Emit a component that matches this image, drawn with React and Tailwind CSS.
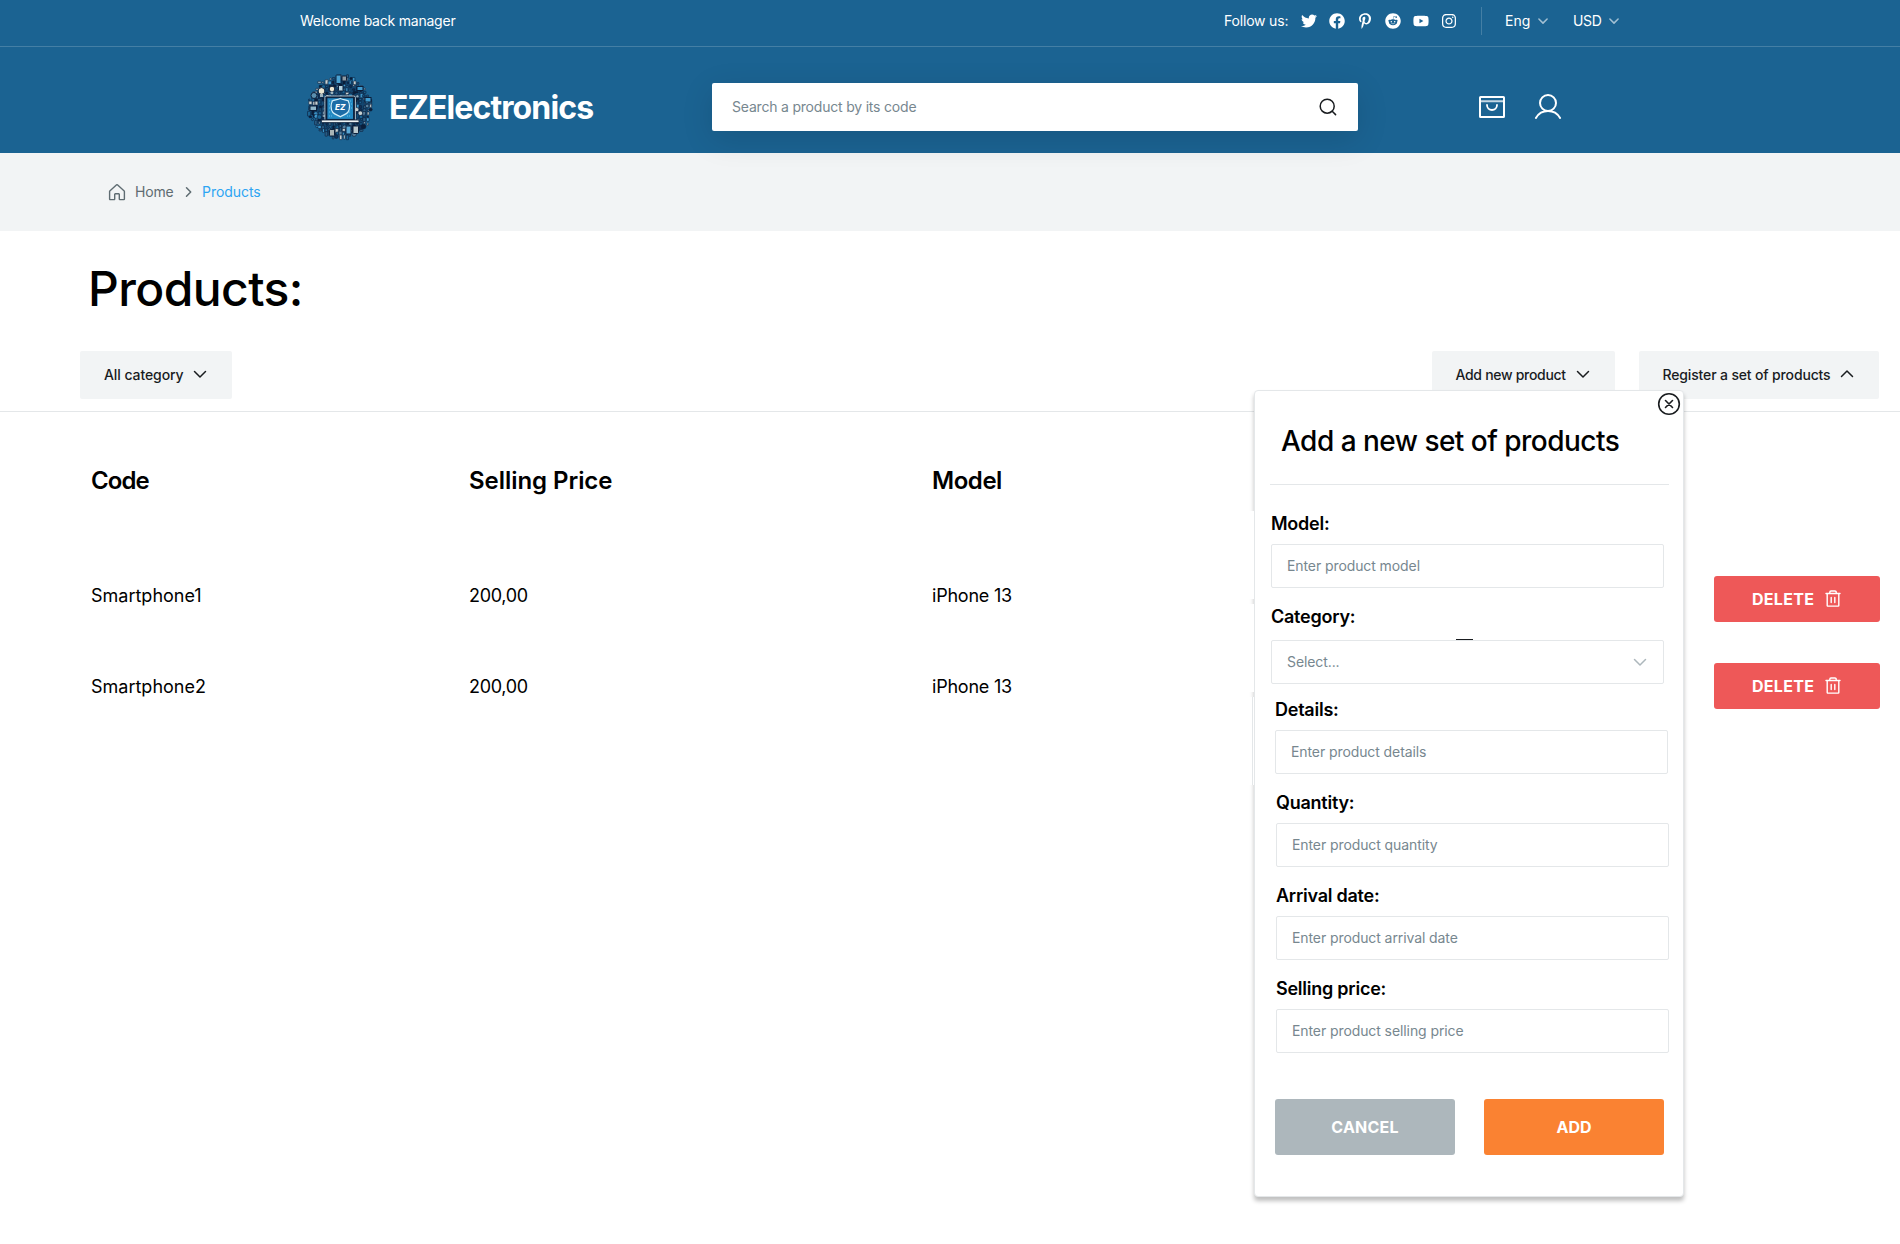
import React from "react";
import { FaFacebook, FaInstagram, FaPinterestP, FaTwitter, FaYoutube, FaReddit } from "react-icons/fa";

function Chevron({ up, className }) {
  return (
    <svg viewBox="0 0 16 16" className={className} fill="none" stroke="currentColor" strokeWidth="1.5" strokeLinecap="round" strokeLinejoin="round">
      <path d={up ? "M2.5 10.5 8 5l5.5 5.5" : "M2.5 5.5 8 11l5.5-5.5"} />
    </svg>
  );
}

function SmallChevron() {
  return (
    <svg viewBox="0 0 12 12" className="size-3 text-white/60" fill="none" stroke="currentColor" strokeWidth="1.5" strokeLinecap="round" strokeLinejoin="round">
      <path d="M1.9 4 6 8.1 10.1 4" />
    </svg>
  );
}

function seeded(seed) {
  let s = seed;
  return () => {
    s = (s * 16807) % 2147483647;
    return s / 2147483647;
  };
}

const PALETTE = ["#0b1f3a", "#123258", "#2b5f86", "#8fb0c2", "#3f9bd0", "#c9d2d2", "#56809e", "#1B6392", "#1B6392"];

const GADGETS = (() => {
  const rand = seeded(4127);
  const items = [];
  for (let y = 9; y <= 74; y += 3.4) {
    for (let x = 8; x <= 72; x += 3.4) {
      const cx = x + rand() * 1.6;
      const cy = y + rand() * 1.6;
      const d = Math.hypot(cx - 39.5, cy - 41);
      const edge = 30 + rand() * 2.5;
      const kind = rand();
      const w = 1.2 + rand() * 2.2;
      const h = 1.4 + rand() * 3.4;
      const fill = PALETTE[Math.floor(rand() * PALETTE.length)];
      if (d < edge) items.push({ cx, cy, kind, w, h, fill });
    }
  }
  return items;
})();

function Logo() {
  return (
    <svg viewBox="0 0 80 80" className="mb-[2px] size-20 shrink-0">
      <circle cx="39.5" cy="41" r="28" fill="#0c2344" opacity=".45" />
      {GADGETS.map((g, i) =>
        g.kind < 0.2 ? (
          <circle key={i} cx={g.cx} cy={g.cy} r={g.w * 0.7} fill={g.fill} stroke="#0b1f3a" strokeWidth=".6" />
        ) : (
          <rect key={i} x={g.cx - g.w / 2} y={g.cy - g.h / 2} width={g.w} height={g.h} rx=".4" fill={g.fill} stroke="#0b1f3a" strokeWidth=".6" />
        )
      )}
      {/* light bulbs */}
      <circle cx="20.5" cy="25" r="3.4" fill="#e9e6d2" stroke="#0b1f3a" />
      <rect x="19" y="28" width="3" height="3" fill="#9fb4bd" />
      <circle cx="31" cy="23" r="2.8" fill="#e9e6d2" stroke="#0b1f3a" />
      <rect x="30" y="25.5" width="2.2" height="2.6" fill="#9fb4bd" />
      {/* phones and panels */}
      <rect x="35" y="9" width="5" height="8.5" rx=".8" fill="#4ba3d3" stroke="#0b1f3a" />
      <rect x="41" y="10" width="4.5" height="5" rx=".8" fill="#8f9ba3" stroke="#0b1f3a" />
      <rect x="37.5" y="19.5" width="4.5" height="5.5" rx=".6" fill="#b5d3e0" stroke="#0b1f3a" />
      <rect x="56" y="20.5" width="6" height="4" fill="#3f9bd0" stroke="#0b1f3a" />
      <rect x="64" y="31.5" width="6" height="4.5" fill="#3f9bd0" stroke="#0b1f3a" />
      <rect x="9" y="40" width="6.5" height="4.5" fill="#8fb6ca" stroke="#0b1f3a" />
      <circle cx="13" cy="29.5" r="3" fill="#5b8fae" stroke="#0b1f3a" />
      <rect x="45" y="60" width="5" height="8" rx=".7" fill="#5aa9d6" stroke="#0b1f3a" />
      <rect x="52" y="60" width="5.5" height="7.5" rx=".7" fill="#b9c8cd" stroke="#0b1f3a" />
      <rect x="28.5" y="63.5" width="5" height="6.5" rx=".7" fill="#a9b4b6" stroke="#0b1f3a" />
      {/* laptop */}
      <rect x="23.9" y="30" width="30.5" height="25" rx="1.6" fill="#0b1f3a" stroke="#d6e2e6" strokeWidth=".8" />
      <rect x="26" y="31.8" width="26.4" height="21.5" fill="#2389c2" stroke="#0b1f3a" strokeWidth=".8" />
      <path d="M28 35h3M28 50h4M46 50h4M47 35h3M28 46h2M48 46h2M28 38h1M50 38h1M28 42h1M50 42h1" stroke="#6dc2ea" strokeWidth=".9" strokeDasharray="1 1" />
      <path d="M39.3 32.5c3 1.4 5.500 1.200 7.800 2.200 1.700 3 2.200 8.800-.4 11.800-1.900 2.100-5 2.800-7.400 4.200-2.400-1.400-5.500-2.100-7.400-4.200-2.600-3-2.100-8.800-.4-11.800 2.300-1 4.800-.8 7.800-2.200Z" fill="#1d6ca6" stroke="#d2eef9" strokeWidth="1.2" />
      <text x="39.2" y="43.8" textAnchor="middle" fontFamily="Inter, sans-serif" fontSize="8" fontWeight="800" fontStyle="italic" fill="#fff">EZ</text>
      <rect x="20.5" y="54" width="37.5" height="2.6" rx="1" fill="#eef3f4" stroke="#0b1f3a" strokeWidth=".8" />
    </svg>
  );
}

function CartIcon() {
  return (
    <svg viewBox="0 0 32 32" className="size-8" fill="none" stroke="#fff" strokeWidth="2" strokeLinecap="round" strokeLinejoin="round">
      <path d="M4 10.2h24" opacity=".75" />
      <rect x="4" y="6" width="24" height="20" rx=".6" />
      <path d="M21 14a5 5 0 0 1-10 0" strokeWidth="1.8" />
    </svg>
  );
}

function UserIcon() {
  return (
    <svg viewBox="0 0 32 32" className="size-8" fill="none" stroke="#fff" strokeWidth="2" strokeLinecap="round" strokeLinejoin="round">
      <circle cx="16" cy="12" r="8" />
      <path d="M3.9 27a14 14 0 0 1 24.2 0" />
    </svg>
  );
}

function HomeIcon() {
  return (
    <svg viewBox="0 0 20 20" className="size-5" fill="none" stroke="#5F6C72" strokeWidth="1.4" strokeLinecap="round" strokeLinejoin="round">
      <path d="M12.3 17v-4.600a.6.6 0 0 0-.6-.6H8.300a.6.6 0 0 0-.6.6V17a.6.6 0 0 1-.6.6H3.200a.6.6 0 0 1-.6-.6V9.500a.7.7 0 0 1 .2-.5l6.800-6.200a.6.6 0 0 1 .8 0L17.200 9a.7.7 0 0 1 .2.500V17a.6.6 0 0 1-.6.6h-3.900a.6.6 0 0 1-.6-.6Z" />
    </svg>
  );
}

function TrashIcon() {
  return (
    <svg viewBox="0 0 20 20" className="size-5" fill="none" stroke="#fff" strokeWidth="1.4" strokeLinecap="round" strokeLinejoin="round">
      <path d="M17 4.500H3M8.200 8.500v5M11.800 8.500v5M15.800 4.500v12a.6.6 0 0 1-.6.6H4.800a.6.6 0 0 1-.6-.6v-12M13.200 4.500V3.200a1.200 1.200 0 0 0-1.200-1.200H8a1.200 1.200 0 0 0-1.200 1.200v1.300" />
    </svg>
  );
}

function Header() {
  return (
    <header className="h-[153px] bg-[#1B6392] text-white">
      <div className="flex h-[47px] items-center border-b border-white/[.18] pb-1 pl-[300px] text-[14px] leading-5">
        <span className="w-[924px] tracking-[-0.22px]">Welcome back manager</span>
        <span className="w-[77px] tracking-[-0.19px]">Follow us:</span>
        <div className="flex w-[180px] items-center gap-3">
          <FaTwitter className="size-4" />
          <FaFacebook className="size-4" />
          <FaPinterestP className="size-4" />
          <FaReddit className="size-4" />
          <FaYoutube className="size-4" />
          <FaInstagram className="size-4" />
        </div>
        <div className="h-7 w-px bg-white/[.18]" />
        <div className="ml-[23px] flex w-[68px] items-center gap-[7px]">
          <span>Eng</span>
          <SmallChevron />
        </div>
        <div className="flex items-center gap-1.5">
          <span className="tracking-[-0.3px]">USD</span>
          <SmallChevron />
        </div>
      </div>
      <div className="mt-9 flex h-12 items-center pl-[301px]">
        <Logo />
        <h2 className="ml-[8px] w-[323px] pt-[2px] text-[32px] leading-10 font-bold tracking-[-0.88px]">EZElectronics</h2>
        <div className="flex h-12 w-[646px] items-center justify-between rounded-[2px] bg-white pr-[20px] pl-5 text-[14px] text-[#77878F] shadow-[0_8px_32px_rgba(0,0,0,0.12)]">
          <span className="pb-[2px] tracking-[-0.2px]">Search a product by its code</span>
          <svg viewBox="0 0 20 20" className="size-5" fill="none" stroke="#191C1F" strokeWidth="1.5" strokeLinecap="round">
            <circle cx="9.2" cy="9.2" r="7" />
            <path d="m14.2 14.2 3.4 3.4" />
          </svg>
        </div>
        <div className="ml-[118px] flex gap-6">
          <CartIcon />
          <UserIcon />
        </div>
      </div>
    </header>
  );
}

function Field({ label, placeholder, select, className }) {
  return (
    <div className={className}>
      <div className="text-[18px] leading-6 font-semibold tracking-[-0.24px] text-black">{label}</div>
      <div className={`flex h-11 w-[393px] items-center justify-between rounded-[2px] border border-[#E4E7E9] bg-white pr-[15px] pl-[15px] text-[14px] tracking-[-0.09px] text-[#77878F] ${select ? "relative mt-[11px]" : "mt-2"}`}>
        <span className="pb-[2px]">{placeholder}</span>
        {select && <Chevron className="size-4 text-[#ADB7BC]" />}
        {select && <span className="absolute -top-[2px] left-[184px] h-px w-[17px] bg-[#191C1F]" />}
      </div>
    </div>
  );
}

function Modal() {
  return (
    <div className="absolute top-[390px] left-[1254px]">
      <div className="relative h-[807px] w-[430px] rounded-[4px] border border-[#E4E7E9] bg-white shadow-[0_4px_4px_rgba(0,0,0,0.25)]">
        <svg viewBox="0 0 24 24" className="absolute top-[1px] right-[2px] size-6" fill="none" stroke="#191C1F" strokeWidth="1.6" strokeLinecap="round">
          <circle cx="12" cy="12" r="10.3" />
          <path d="m8.500 8.500 7 7M15.500 8.500l-7 7" />
        </svg>
        <h3 className="mt-[34px] ml-[26px] text-[28px] leading-8 font-medium tracking-[-0.52px] text-black">Add a new set of products</h3>
        <div className="mt-[27px] ml-[15px] h-px w-[399px] bg-[#E4E7E9]" />
        <Field className="mt-[27px] ml-[16px]" label="Model:" placeholder="Enter product model" />
        <Field className="mt-[17px] ml-[16px]" label="Category:" placeholder="Select..." select />
        <Field className="mt-[14px] ml-[20px]" label="Details:" placeholder="Enter product details" />
        <Field className="mt-[17px] ml-[21px]" label="Quantity:" placeholder="Enter product quantity" />
        <Field className="mt-[17px] ml-[21px]" label="Arrival date:" placeholder="Enter product arrival date" />
        <Field className="mt-[17px] ml-[21px]" label="Selling price:" placeholder="Enter product selling price" />
        <div className="mt-[46px] ml-[20px] flex gap-[29px] text-[16px] font-bold text-white">
          <div className="flex h-14 w-[180px] items-center justify-center rounded-[3px] bg-[#ADB7BC] tracking-[0.2px]">CANCEL</div>
          <div className="flex h-14 w-[180px] items-center justify-center rounded-[3px] bg-[#FA8232]">ADD</div>
        </div>
      </div>
      {/* table cells that cover part of the dialog's left shadow */}
      <div className="absolute top-[121px] -left-[5px] h-[88px] w-[5px] bg-white" />
      <div className="absolute top-[214px] -left-[5px] h-[88px] w-[5px] bg-white" />
      <div className="absolute top-[307px] -left-[5px] h-[88px] w-[5px] bg-white pl-[3px]">
        <div className="h-full w-px bg-[#E4E7E9]" />
      </div>
    </div>
  );
}

function FilterButton({ children, up, className }) {
  return (
    <div className={`flex h-12 items-center justify-between rounded-[2px] bg-[#F2F4F5] px-6 pb-[2px] text-[14px] font-medium text-[#191C1F] ${className}`}>
      <span>{children}</span>
      <Chevron up={up} className="size-4" />
    </div>
  );
}

function DeleteButton() {
  return (
    <div className="flex h-[46px] w-[166px] items-center rounded-[3px] bg-[#EE5858] pl-[38px] text-[16px] font-bold text-white">
      <span className="w-[70.5px] tracking-[0.3px]">DELETE</span>
      <TrashIcon />
    </div>
  );
}

function Row({ code, className }) {
  return (
    <div className={`flex h-[46px] items-center text-[18px] leading-6 text-black ${className}`}>
      <span className="w-[378px]">{code}</span>
      <span className="w-[463px] tracking-[-0.3px]">200,00</span>
      <span className="tracking-[-0.22px]">iPhone 13</span>
    </div>
  );
}

export default function App() {
  return (
    <div className="relative h-[1244px] w-[1900px] overflow-hidden bg-white font-['Inter',sans-serif]">
      <Header />
      <nav className="flex h-[78px] items-center bg-[#F2F4F5] pl-[107px] text-[14px] leading-5">
        <HomeIcon />
        <span className="ml-2 w-[47px] tracking-[-0.15px] text-[#5F6C72]">Home</span>
        <svg viewBox="0 0 12 12" className="size-3" fill="none" stroke="#5F6C72" strokeWidth="1.5" strokeLinecap="round" strokeLinejoin="round">
          <path d="M4.500 1.800 8.700 6l-4.200 4.200" />
        </svg>
        <span className="ml-[8px] tracking-[-0.05px] text-[#2DA5F3]">Products</span>
      </nav>
      <h1 className="mt-[30px] ml-[88px] text-[48px] leading-[56px] font-medium tracking-[-0.58px] text-black">Products:</h1>
      <div className="flex h-[95px] items-start border-b border-[#E4E7E9] pt-[34px] pl-20">
        <FilterButton className="w-[152px] tracking-[-0.08px]">All category</FilterButton>
        <FilterButton className="ml-[1199.5px] w-[183px] tracking-[-0.3px]">Add new product</FilterButton>
        <FilterButton up className="ml-[24px] w-[240px] tracking-[-0.15px]">Register a set of products</FilterButton>
      </div>
      <div className="flex pl-[91px]">
        <div className="w-[1623px]">
          <div className="mt-[53px] flex text-[24px] leading-8 font-semibold text-black">
            <span className="w-[378px] tracking-[-0.9px]">Code</span>
            <span className="w-[463px] tracking-[-0.05px]">Selling Price</span>
            <span className="tracking-[-0.45px]">Model</span>
          </div>
          <Row className="mt-[76px]" code="Smartphone1" />
          <Row className="mt-[45px]" code="Smartphone2" />
        </div>
        <div className="mt-[164px] flex flex-col gap-[41px]">
          <DeleteButton />
          <DeleteButton />
        </div>
      </div>
      <Modal />
    </div>
  );
}
